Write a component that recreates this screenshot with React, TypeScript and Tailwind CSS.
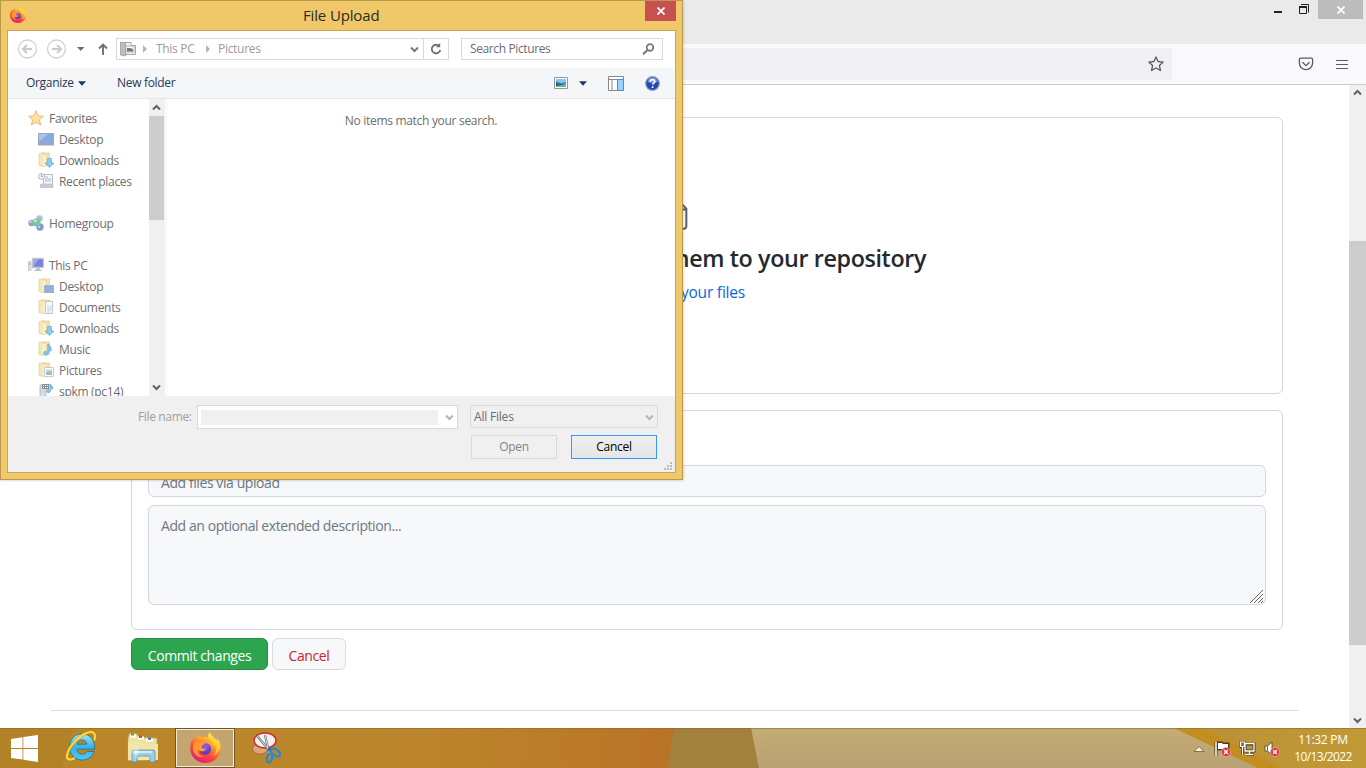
import React from 'react';

type IconProps = { className?: string };

function FirefoxLogo({ className = '' }: IconProps) {
  return (
    <svg viewBox="0 0 32 32" className={className}>
      <defs>
        <linearGradient id="ffBody" x1="0.85" y1="0.05" x2="0.3" y2="1">
          <stop offset="0" stopColor="#fff04a" />
          <stop offset="0.35" stopColor="#ffa32a" />
          <stop offset="0.65" stopColor="#ff4a3c" />
          <stop offset="1" stopColor="#e3187c" />
        </linearGradient>
        <radialGradient id="ffGlobe" cx="0.5" cy="0.3" r="0.7">
          <stop offset="0" stopColor="#9a5bf5" />
          <stop offset="1" stopColor="#4a3aa8" />
        </radialGradient>
      </defs>
      <path d="M20.5 0c-1.500 2-2 3.600-1.700 5.600-2.500-.8-5-.8-7.300.2C10 5 9 3.600 8.600 2.400 6.500 4 5.600 6 5.300 8 4.500 8 3.900 6.500 3.900 5.600 1.500 8.500.2 12 .2 16.500.2 25.500 7.200 32 16 32s15.800-6.800 15.800-15.600c0-4.500-1.500-7.600-4-10.200.3 1.400.3 2.500.1 3.400C25.600 5 21.500 4 20.500 0z" fill="url(#ffBody)" />
      <circle cx="15.800" cy="17.500" r="6" fill="url(#ffGlobe)" />
      <path d="M4.500 10.500c3-2 5.500-1 7.500.6 1.400 0 3.300-.1 3.400.6.1 1.400-3 1.700-3.300 3.400-.2 1.600 2.500 2.600 4.600 1.900-1.200 3.400-5.400 3.800-8 1.800-1.300 4.200 3 7 7 6.400-6.500 2.600-12.700-2.500-12.700-8.500 0-2.500.4-4.400 1.500-6.200z" fill="#ff9a2b" />
      <path d="M20.500 0c-1.500 2-2 3.600-1.700 5.600 2.600 3 6.400 4.700 6.200 10 1-1.400 1.200-2.600 1.200-3.600 2.300 5 .8 10-3.200 12.800 6.500-1.800 9-8.300 7.300-13.300-.5-2-1.500-3.800-2.500-5.300.3 1.400.3 2.500.1 3.400C25.600 5 21.500 4 20.500 0z" fill="#ffd83d" opacity=".8" />
    </svg>
  );
}

function ExplorerLogo() {
  return (
    <svg viewBox="0 0 32 32" className="size-8">
      <defs>
        <linearGradient id="ieBlue" x1="0" y1="0" x2="0" y2="1">
          <stop offset="0" stopColor="#a5e9fa" />
          <stop offset=".5" stopColor="#36b2e8" />
          <stop offset="1" stopColor="#4ccaf4" />
        </linearGradient>
      </defs>
      <path d="M17 4C9 4 4.500 10 4.500 17S9.500 30 17 30c6 0 10.500-3 12-8.500h-7c-1 1.900-2.600 2.700-4.800 2.700-3 0-5-1.900-5.200-5h17.600C30.200 10 25 4 17 4zm-4.800 10.200c.4-2.700 2.200-4.300 4.900-4.300s4.500 1.600 4.800 4.300z" fill="url(#ieBlue)" stroke="#16709f" strokeWidth=".8" />
      <path d="M29.500 9.500C31.500 2 27 .5 20.500 3.500 12 7.500 3 18 2 25.500c-.5 4 2.500 5 7 3" fill="none" stroke="#c08a10" strokeWidth="3" strokeLinecap="round" />
      <path d="M29.500 9.500C31.500 2 27 .5 20.500 3.500 12 7.500 3 18 2 25.500c-.5 4 2.500 5 7 3" fill="none" stroke="#ffdc3c" strokeWidth="2" strokeLinecap="round" />
    </svg>
  );
}

function FileManagerIcon() {
  return (
    <svg viewBox="0 0 34 32" className="h-8 w-[34px]">
      <path d="M3 5l1-4h7l1 3 14 2 1 22-24 1z" fill="#c9bd80" />
      <path d="M5 2h7l2 4h18v22H3V6z" fill="#efe3a1" stroke="#b7a35a" strokeWidth=".7" />
      <path d="M5 2.500h6v3H5zM13 4.500h6v3h-6zM21 6.500h7v3h-7z" fill="#fff" />
      <path d="M6 1.500h3v2H6z" fill="#2fb34a" />
      <path d="M14 3.800h3v2h-3z" fill="#d33a2c" />
      <path d="M23 5.800h3v2h-3z" fill="#2a74c9" />
      <path d="M3 10h10l2 2h18v16H3z" fill="#f2e5a6" />
      <path d="M7 20q0-2 2-2h19q2 0 2 2v10h-5v-5q0-1-1-1H13q-1 0-1 1v5H7z" fill="#a0cfe4" stroke="#4f97b8" strokeWidth=".8" />
      <path d="M9 20h18" stroke="#e0f5fb" strokeWidth="1.500" />
      <path d="M11 14v12M6 20h10M8 17l6 6M14 17l-6 6" stroke="#fff" strokeWidth=".7" />
    </svg>
  );
}

function SnippingIcon() {
  return (
    <svg viewBox="0 0 32 32" className="size-8">
      <ellipse cx="9" cy="17" rx="7.500" ry="5" fill="#d8a878" stroke="#b86450" />
      <ellipse cx="14" cy="8.500" rx="11" ry="7.500" fill="#f4f0f0" stroke="#cf2d2d" strokeWidth="1.500" />
      <path d="M6 4l13 15M14 3l4 18" stroke="#67707a" strokeWidth="2.200" />
      <path d="M6 4l13 15M14 3l4 18" stroke="#d9e0e4" strokeWidth="1" />
      <path d="M17 18l3-1" stroke="#1c68a4" strokeWidth="3" />
      <ellipse cx="24.500" cy="20.500" rx="5.300" ry="3" transform="rotate(38 24.500 20.500)" fill="none" stroke="#2b8acb" strokeWidth="2.400" />
      <ellipse cx="18.500" cy="26" rx="2.600" ry="4.500" transform="rotate(15 18.500 26)" fill="none" stroke="#2b8acb" strokeWidth="2.400" />
    </svg>
  );
}

const folderBack = (
  <>
    <path d="M1 1.500l5-1v14l-5-1z" fill="#f6e9b9" stroke="#e3cf95" strokeWidth=".7" />
    <path d="M6 1h5.500v12.500H6z" fill="#f3e2a9" stroke="#e3cf95" strokeWidth=".7" />
    <path d="M4 3l4-1v13l-4-1z" fill="#faf0cc" stroke="#e8d8a4" strokeWidth=".5" />
  </>
);

type Kind = 'star' | 'desktop' | 'downloads' | 'recent' | 'homegroup' | 'pc' | 'folderDesktop' | 'documents' | 'music' | 'pictures' | 'media';

function TreeIcon({ kind }: { kind: Kind }) {
  const art: Record<Kind, React.ReactNode> = {
    star: <path d="M8 .8l2.200 5 5.200.5-4 3.500 1.200 5.100L8 12.200l-4.600 2.700 1.200-5.100-4-3.500 5.200-.5z" fill="#fce3a0" stroke="#f0b47c" strokeWidth="1" />,
    desktop: (
      <>
        <path d="M.5 2.500h15v11H.5z" fill="#87a9df" stroke="#9aa8bb" />
        <path d="M1 3h9L2 10H1z" fill="#a9c3ee" />
        <path d="M0 12h16v2.500H0z" fill="#9aa9ba" />
      </>
    ),
    downloads: (
      <>
        {folderBack}
        <path d="M9.500 6.500h4v4.500H16l-4.500 4.500L7 11h2.500z" fill="#8cccf0" stroke="#69a9d4" strokeWidth=".7" />
      </>
    ),
    recent: (
      <>
        <path d="M5.500 1.500h9v10h-9z" fill="#f6f8fa" stroke="#b5bcc3" />
        <path d="M7 4h3M7 6h6M7 8h6" stroke="#9bbcdc" />
        <path d="M3 11l12 0v3.500H2z" fill="#c9cdd1" stroke="#b1b6ba" strokeWidth=".6" />
        <circle cx="3.500" cy="3.500" r="3" fill="#f4f4f4" stroke="#b5b9bd" />
        <path d="M3.500 1.500v2H5" stroke="#888" strokeWidth=".7" fill="none" />
      </>
    ),
    homegroup: (
      <>
        <circle cx="3.500" cy="8" r="3.200" fill="#8ba4d8" />
        <circle cx="11.500" cy="3.500" r="3.200" fill="#b1bfe4" />
        <circle cx="12" cy="12" r="3.700" fill="#8b96d8" />
        <circle cx="8.500" cy="7.500" r="4" fill="#7fc795" />
        <circle cx="7.500" cy="6" r="1.300" fill="#c9efd0" />
        <circle cx="2.500" cy="6.800" r="1" fill="#dde7fa" />
        <circle cx="11" cy="12" r="1" fill="#dcdffa" />
      </>
    ),
    pc: (
      <>
        <path d="M.5 4.500h2.500v9H.5z" fill="#e0e3e3" stroke="#b8bdbe" strokeWidth=".7" />
        <path d="M1.300 6h1v2h-1z" fill="#6cc36c" />
        <path d="M4.500 1.500h11v9h-11z" fill="#7a7ede" stroke="#c5c9ce" strokeWidth="1.300" />
        <path d="M5 2h6l-5 7H5z" fill="#9ca4ee" />
        <path d="M8 11h4v2h2v1H6v-1h2z" fill="#bfc4c8" />
      </>
    ),
    folderDesktop: (
      <>
        {folderBack}
        <path d="M6.500 7.500h9v6h-9z" fill="#8eb0e2" stroke="#a7b4c4" />
        <path d="M6 13h10v2H6z" fill="#9fb0c6" />
      </>
    ),
    documents: (
      <>
        {folderBack}
        <path d="M7.500 2.500h7v12h-7z" fill="#fbfcfd" stroke="#b9c0c7" strokeWidth=".9" />
        <path d="M9 7h2M12 7h1.500M9 9h4.500M9 11h4.500M9 13h3" stroke="#a8c3dd" strokeWidth=".8" />
      </>
    ),
    music: (
      <>
        {folderBack}
        <path d="M10 12V3c1 2 4 3 3 7M10 12a2 1.700 0 1 1-1.500-1.500" stroke="#78b9de" fill="#8ac6e8" strokeWidth="1.500" />
      </>
    ),
    pictures: (
      <>
        {folderBack}
        <path d="M6.500 5.500h9v9h-9z" fill="#fff" stroke="#c2c8cd" strokeWidth=".9" />
        <path d="M8 7.500h6v3H8z" fill="#b5dcf2" />
        <path d="M8 10l6-1v4H8z" fill="#9cc4ac" />
      </>
    ),
    media: (
      <>
        <path d="M2 2h6v14H2z" fill="#d9dcde" stroke="#aaafb3" strokeWidth=".8" />
        <path d="M4 1h7v5H4z" fill="#86919a" />
        <path d="M5 2h1v1H5zM7 2h1v1H7zM9 2h1v1H9zM5 4h1v1H5zM7 4h1v1H7zM9 4h1v1H9z" fill="#f4f4f4" />
        <path d="M12 8V1c1 2 3 2 2.500 5M12 8a1.500 1.300 0 1 1-1-1.200" stroke="#6fb5e0" fill="#8ac6e8" strokeWidth="1.200" />
      </>
    ),
  };
  return <svg viewBox="0 0 16 16" className="mb-px size-4 shrink-0">{art[kind]}</svg>;
}

const tree: { label: string; kind?: Kind; top?: boolean }[] = [
  { label: 'Favorites', kind: 'star', top: true },
  { label: 'Desktop', kind: 'desktop' },
  { label: 'Downloads', kind: 'downloads' },
  { label: 'Recent places', kind: 'recent' },
  { label: '' },
  { label: 'Homegroup', kind: 'homegroup', top: true },
  { label: '' },
  { label: 'This PC', kind: 'pc', top: true },
  { label: 'Desktop', kind: 'folderDesktop' },
  { label: 'Documents', kind: 'documents' },
  { label: 'Downloads', kind: 'downloads' },
  { label: 'Music', kind: 'music' },
  { label: 'Pictures', kind: 'pictures' },
  { label: 'spkm (pc14)', kind: 'media' },
];

function Chevron({ up = false, className = '' }: { up?: boolean; className?: string }) {
  return (
    <svg viewBox="0 0 9 7" className={`h-[7px] w-[9px] ${className}`} fill="none" stroke="currentColor" strokeWidth="2">
      <path d={up ? 'M1 5.500L4.500 2 8 5.500' : 'M1 1.500L4.500 5 8 1.500'} />
    </svg>
  );
}

function Caret({ className = '' }: IconProps) {
  return <svg viewBox="0 0 8 5" className={`h-[5px] w-2 ${className}`}><path d="M0 .3h8L4 4.700z" fill="currentColor" /></svg>;
}

function NavRow() {
  return (
    <div className="flex h-[37px] shrink-0 items-center bg-white">
      <svg viewBox="0 0 96 24" className="mb-px ml-2 h-6 w-24 shrink-0" fill="none">
        <g stroke="#d0d0d0" strokeWidth="1.300">
          <circle cx="11.500" cy="12" r="9" />
          <circle cx="40.500" cy="12" r="9" />
        </g>
        <path d="M16 12H7.500M11 8l-4 4 4 4M36 12h8.500M41 8l4 4-4 4" stroke="#cacaca" strokeWidth="2" />
        <path d="M61 10h7.500L64.750 14z" fill="#6d6d6d" />
        <path d="M87 18V8M83 11.500L87 7.500l4 4" stroke="#707070" strokeWidth="1.900" />
      </svg>
      <div className="mb-px ml-1 flex h-[22px] w-[333px] items-center border border-[#d9d9d9] text-[12px] tracking-[-0.3px] text-[#9b9b9b]">
        <svg viewBox="0 0 16 16" className="mb-px ml-[3px] size-4">
          <path d="M4 1.500h7v3h4.500v9H4z" fill="#f1f1f1" stroke="#a8a8a8" />
          <path d="M6 5h8v6H6z" fill="#fff" stroke="#aaa" strokeWidth=".8" />
          <path d="M7 7h3l3 1v2.500H7z" fill="#777" />
          <path d="M.5 1l5 1v13l-5-1z" fill="#bdbdbd" stroke="#999" strokeWidth=".7" />
        </svg>
        <svg viewBox="0 0 4 8" className="ml-[7px] h-2 w-1"><path d="M0 0l4 4-4 4z" fill="#b5b5b5" /></svg>
        <span className="ml-[9px] w-[41px] whitespace-nowrap leading-[18px]">This PC</span>
        <svg viewBox="0 0 4 8" className="ml-[9px] h-2 w-1"><path d="M0 0l4 4-4 4z" fill="#b5b5b5" /></svg>
        <span className="ml-2 whitespace-nowrap leading-[18px]">Pictures</span>
        <Chevron className="ml-auto mr-1 text-[#777]" />
        <div className="flex h-full w-[25px] items-center justify-center border-l border-[#d9d9d9]">
          <svg viewBox="0 0 12 12" className="size-3" fill="none" stroke="#707070" strokeWidth="1.800">
            <path d="M9.500 3.400A4.300 4.300 0 1 0 10.300 7" />
            <path d="M10.200 0v4.300H6z" fill="#707070" stroke="none" />
          </svg>
        </div>
      </div>
      <div className="mb-px ml-3 flex h-[22px] w-[202px] items-center justify-between border border-[#d9d9d9] pl-2 pr-[7px] text-[12px] tracking-[-0.38px] text-[#6d6d6d]">
        <span className="whitespace-nowrap leading-[18px]">Search Pictures</span>
        <svg viewBox="0 0 13 12" className="h-3 w-[13px]" fill="none" stroke="#777">
          <circle cx="8" cy="4.500" r="3.300" strokeWidth="1.700" />
          <path d="M5.500 7L1 11.300" strokeWidth="2" />
        </svg>
      </div>
    </div>
  );
}

function CommandBar() {
  return (
    <div className="flex h-[31px] shrink-0 items-center border-b border-[#e6e7e9] bg-[#f5f6f7] text-[12px] tracking-[-0.32px] text-[#1e395b]">
      <span className="ml-[18px] w-[48px] whitespace-nowrap">Organize</span>
      <Caret className="ml-1" />
      <span className="ml-[31px] w-[60px] whitespace-nowrap">New folder</span>
      <svg viewBox="0 0 14 12" className="ml-auto h-3 w-3.5">
        <path d="M.5.500h13v11H.5z" fill="#fff" stroke="#8d9aa6" />
        <path d="M2 2h10v8H2z" fill="#3b8fd1" />
        <path d="M2 2h10v3L7 6 2 4z" fill="#8bc6ee" />
        <path d="M2 6l4 1 6 0v1L2 10z" fill="#285f3d" />
        <path d="M2 9l10-2v3H2z" fill="#6bb4a0" />
      </svg>
      <Caret className="ml-[11px]" />
      <svg viewBox="0 0 16 15" className="ml-[21px] h-[15px] w-4" fill="none">
        <path d="M.5.500h15v14H.5z" fill="#fff" stroke="#85888c" />
        <path d="M.5 3.500h15M4 3.500v11" stroke="#85888c" />
        <path d="M9.500 3.500h6v11h-6z" fill="#9bd1fb" stroke="#3d93df" />
      </svg>
      <svg viewBox="0 0 15 15" className="ml-[21px] mr-[15px] size-[15px]" fill="none">
        <circle cx="7.500" cy="7.500" r="6.800" fill="#2346b8" stroke="#8f9bb5" strokeWidth="1.200" />
        <path d="M2.500 6a5 4.500 0 0 1 10 0q-5 2-10 0z" fill="#6f94e8" />
        <path d="M5.300 5.800c0-3 4.500-2.800 4.500-.3 0 1.600-2.200 1.500-2.200 3.300M7.600 10.300v1.700" stroke="#fff" strokeWidth="1.600" />
      </svg>
    </div>
  );
}

function UploadDialog() {
  return (
    <section className="absolute left-0 top-0 z-10 flex h-[480px] w-[683px] flex-col border border-[#b99a4c] bg-[#f0c869] px-[6px] pb-[6px] shadow-[0_0_3px_rgba(0,0,0,0.25)]">
      <header className="flex h-[29px] shrink-0 items-start">
        <FirefoxLogo className="ml-[3px] mt-[6px] size-4" />
        <h1 className="ml-[277px] mt-1 whitespace-nowrap text-[15px] leading-[21px] tracking-[-0.15px] text-[#2c2a26]">File Upload</h1>
        <button className="ml-auto flex h-5 w-[31px] items-center justify-center bg-[#c75050]">
          <svg viewBox="0 0 8 8" className="size-2" stroke="#fff" strokeWidth="1.700"><path d="M.5.500l7 7M7.500.500l-7 7" /></svg>
        </button>
      </header>
      <div className="flex min-h-0 flex-1 flex-col border border-[#c8a558] bg-[#f0f0f0]">
        <NavRow />
        <CommandBar />
        <div className="flex h-[297px] shrink-0 bg-white">
          <nav className="h-full w-[141px] overflow-hidden pt-[9px]">
            {tree.map((item, i) => (
              <div key={i} className={`flex h-[21px] items-center gap-[5px] whitespace-nowrap text-[12px] tracking-[-0.3px] text-[#6d6d6d] ${item.top ? 'pl-5' : 'pl-[30px]'}`}>
                {item.kind && <TreeIcon kind={item.kind} />}
                <span>{item.label}</span>
              </div>
            ))}
          </nav>
          <div className="flex h-full w-4 flex-col items-center bg-[#f0f0f0] text-[#606060]">
            <div className="flex h-[17px] w-full items-center justify-center pr-[2px]"><Chevron up /></div>
            <div className="mr-px h-[104px] w-[15px] bg-[#cdcdcd]" />
            <div className="mt-auto flex h-[17px] w-full items-center justify-center pr-[2px]"><Chevron /></div>
          </div>
          <div className="ml-px flex flex-1 justify-center border-l border-[#f4f4f4] pt-[14px] text-[12px] leading-4 tracking-[-0.3px] text-[#6d6d6d]">
            <p>No items match your search.</p>
          </div>
        </div>
        <footer className="flex flex-1 flex-col pt-[9px]">
          <div className="flex items-start">
            <label className="ml-[130px] mt-1 w-[59px] whitespace-nowrap text-[12px] leading-4 tracking-[-0.35px] text-[#a0a0a0]">File name:</label>
            <div className="flex h-6 w-[261px] items-center border border-[#d9d9d9] bg-white">
              <div className="ml-[3px] h-[15px] w-[237px] bg-[#f0f0f0]" />
              <Chevron className="ml-auto mr-[3px] mt-px text-[#b5b5b5]" />
            </div>
            <div className="ml-3 flex h-[23px] w-[188px] items-center justify-between border border-[#d9d9d9] pl-[3px] pr-[3px] text-[12px] tracking-[-0.2px] text-[#6d6d6d]">
              <span>All Files</span>
              <Chevron className="mt-px text-[#b5b5b5]" />
            </div>
          </div>
          <div className="mt-[6px] flex justify-end gap-3.5 pr-[18px] text-[12px] tracking-[-0.3px]">
            <button className="h-6 w-[86px] border border-[#d9d9d9] text-[#838383]">Open</button>
            <button className="h-6 w-[86px] border border-[#3399ff] bg-gradient-to-b from-[#f0f0f0] to-[#e5e5e5] text-black">Cancel</button>
          </div>
          <svg viewBox="0 0 8 8" className="ml-auto mr-[3px] mt-[3px] size-2" fill="#bcbcbc">
            <path d="M6 0h2v2H6zM3 3h2v2H3zM6 3h2v2H6zM0 6h2v2H0zM3 6h2v2H3zM6 6h2v2H6z" />
          </svg>
        </footer>
      </div>
    </section>
  );
}

function BrowserChrome() {
  return (
    <>
      <div className="flex h-[44px] shrink-0 items-start justify-end bg-[#eaeaea]">
        <svg viewBox="0 0 50 20" className="h-5 w-[50px]" fill="none" stroke="#222">
          <path d="M6 12h8" strokeWidth="2" />
          <path d="M31.500 7h7v6.500h-7zM33 4.500h7.500v8" strokeWidth="1" />
          <path d="M31 7h8" strokeWidth="2" />
        </svg>
        <button className="mr-[3px] flex h-[19px] w-[45px] items-center justify-center bg-[#bcbcbc]">
          <svg viewBox="0 0 8 8" className="size-2" stroke="#fff" strokeWidth="1.800"><path d="M.5.500l7 7M7.500.500l-7 7" /></svg>
        </button>
      </div>
      <div className="flex h-[41px] shrink-0 items-center justify-end border-b border-[#cacacf] bg-[#f9f9fb]">
        <div className="flex h-8 w-[700px] items-center justify-end rounded bg-[#f0f0f4] pr-2">
          <svg viewBox="0 0 16 16" className="size-4" fill="none" stroke="#5b5b66" strokeWidth="1.300" strokeLinejoin="round">
            <path d="M8 .9l2.100 4.600 5.100.6-3.800 3.400 1 5L8 12l-4.400 2.500 1-5L.8 6.100l5.100-.6z" />
          </svg>
        </div>
        <svg viewBox="0 0 16 16" className="ml-[126px] size-4" fill="none" stroke="#5b5b66" strokeWidth="1.300" strokeLinecap="round">
          <path d="M2.700 2.200h10.600c.8 0 1.300.5 1.300 1.300v3.600a6.600 6.600 0 0 1-13.200 0V3.500c0-.8.5-1.300 1.300-1.300zM4.800 6.500L8 9.600l3.200-3.100" />
        </svg>
        <svg viewBox="0 0 12 11" className="ml-[22px] mr-[18px] h-[11px] w-3" stroke="#5b5b66" strokeWidth="1.200">
          <path d="M0 1.500h12M0 5.500h12M0 9.500h12" />
        </svg>
      </div>
    </>
  );
}

function UploadPage() {
  return (
    <main className="flex min-h-0 flex-1 bg-white">
      <div className="flex flex-1 flex-col pt-8">
        <div className="ml-[131px] w-[1152px]">
          <div className="flex h-[277px] flex-col items-end rounded-md border border-[#d0d7de] pt-[81px]">
            <svg viewBox="0 0 24 24" className="mr-[590px] h-8 w-8" fill="none" stroke="#57606a" strokeWidth="1.500">
              <path d="M5 2h9.500l5.250 5.250V20.500a1.750 1.750 0 0 1-1.750 1.750H5a1.750 1.750 0 0 1-1.750-1.750V3.750C3.250 2.800 4 2 5 2zM14 2v4.500c0 .8.500 1.300 1.300 1.300h4.400" />
            </svg>
            <h2 className="mr-[356px] mt-[9px] whitespace-nowrap text-[23.3px] font-semibold leading-9 tracking-[-0.38px] text-[#24292f]">Drag files here to add them to your repository</h2>
            <p className="mr-[537px] mt-1 whitespace-nowrap text-[15.5px] leading-6 tracking-[-0.2px] text-[#24292f]">Or <a className="text-[#0969da]">choose your files</a></p>
          </div>
          <div className="mt-4 h-[220px] rounded-md border border-[#d0d7de] px-4 pt-[54px] text-[14px] tracking-[-0.42px] text-[#6e7781]">
            <div className="flex h-8 items-center rounded-md border border-[#d0d7de] bg-[#f6f8fa] px-3 pt-[3px]"><span>Add files via upload</span></div>
            <div className="mt-2 flex h-[100px] justify-between rounded-md border border-[#d0d7de] bg-[#f6f8fa] pl-3">
              <span className="pt-[9px] leading-[21px]">Add an optional extended description...</span>
              <svg viewBox="0 0 15 15" className="mr-px self-end size-[15px]" stroke="#666" fill="none"><path d="M1 14L14 1M5 14l9-9M9 14l5-5M12 14l2-2" /></svg>
            </div>
          </div>
          <div className="mt-2 flex gap-1 text-[14px] tracking-[-0.4px]">
            <button className="h-8 w-[137px] rounded-md border border-[#288f46] bg-[#2da44e] pt-0.5 text-white">Commit changes</button>
            <button className="h-8 w-[74px] rounded-md border border-[#d8dbde] bg-[#f6f8fa] pt-0.5 text-[#cf222e]">Cancel</button>
          </div>
        </div>
        <hr className="ml-[51px] mt-10 w-[1248px] border-[#d8dee4]" />
      </div>
      <div className="flex w-[17px] flex-col bg-[#f0f0f0] text-[#606060]">
        <div className="flex h-[156px] justify-center pt-1"><Chevron up /></div>
        <div className="h-[404px] bg-[#cdcdcd]" />
        <div className="mt-auto flex h-4 items-center justify-center"><Chevron /></div>
      </div>
    </main>
  );
}

function Wallpaper() {
  return (
    <svg viewBox="0 0 1366 40" className="absolute inset-0 h-10 w-full" preserveAspectRatio="none">
      <defs>
        <linearGradient id="barLeft">
          <stop offset="0" stopColor="#b98628" />
          <stop offset=".6" stopColor="#bd862c" />
          <stop offset="1" stopColor="#b97227" />
        </linearGradient>
        <linearGradient id="barTan" x1="0" y1="0" x2="0" y2="1">
          <stop offset="0" stopColor="#c4ac75" />
          <stop offset="1" stopColor="#b9a272" />
        </linearGradient>
        <linearGradient id="barRight">
          <stop offset="0" stopColor="#b99134" />
          <stop offset="1" stopColor="#c19937" />
        </linearGradient>
      </defs>
      <path d="M0 0h680v40H0z" fill="url(#barLeft)" />
      <path d="M0 0h73L62 40H0z" fill="#ad7d24" opacity=".5" />
      <path d="M674 0h80l6 40h-93z" fill="#a2803d" />
      <path d="M751 0h430l90 40H759z" fill="url(#barTan)" />
      <path d="M1174 0h192v40H1262z" fill="url(#barRight)" />
      <path d="M1174 0h28l80 40h-24z" fill="#c38e20" />
      <path d="M0 .5h1366" stroke="#8b6d2c" opacity=".6" />
    </svg>
  );
}

function Blocked({ x, y }: { x: number; y: number }) {
  return (
    <g>
      <circle cx={x} cy={y} r="4.500" fill="#dc2f35" stroke="#f5b0ac" strokeWidth=".7" />
      <path d={`M${x - 2} ${y - 2}l4 4m0-4l-4 4`} stroke="#fff" strokeWidth="1.400" />
    </g>
  );
}

function Taskbar() {
  return (
    <div className="relative h-10 shrink-0 overflow-hidden">
      <Wallpaper />
      <div className="relative flex h-full items-center">
        <svg viewBox="0 0 27 27" className="ml-[11px] size-[27px]" fill="#fff">
          <path d="M0 4l11.500-1.700v10.700H0zM12.300 2.100L27 0v13H12.300zM0 13.900h11.500v10.600L0 22.900zM12.300 13.900H27V27l-14.700-2.200z" />
        </svg>
        <div className="ml-[27px] mb-1"><ExplorerLogo /></div>
        <div className="ml-[28px]"><FileManagerIcon /></div>
        <div className="ml-4 flex h-10 w-[60px] border border-[#73542a]">
          <div className="flex flex-1 items-center justify-center border border-[#f6ead2] bg-[#c3a571]"><FirefoxLogo className="mb-px size-[31px]" /></div>
        </div>
        <div className="ml-[16px]"><SnippingIcon /></div>
        <svg viewBox="0 0 90 20" className="ml-auto h-5 w-[90px]" fill="none">
          <path d="M2 13.500l5-5 5 5z" fill="#f5efe2" stroke="#735a30" strokeWidth=".8" />
          <g stroke="#4b3a1e" strokeWidth="3"><path d="M24 4v14M26 5h4l1 1h5v6h-5l-1-1h-4zM53 6h9v7h-9zM54 16.500h8M58 14v2M49 4.500h3v4h-3zM50.500 9v8" /></g>
          <path d="M24 4v14" stroke="#fff" strokeWidth="1.500" />
          <path d="M26 5h4l1 1h5v6h-5l-1-1h-4z" fill="#fff" />
          <path d="M53 5.500h9v7.500h-9zM53.500 16.500h8M57.500 13v3.500" stroke="#fff" strokeWidth="1.300" />
          <path d="M48.500 4h4v4.500h-4z" fill="#8a6b35" stroke="#fff" strokeWidth="1.200" />
          <path d="M50.500 8.500V17" stroke="#fff" strokeWidth="1.300" />
          <path d="M73 8h2.500L80 4v13l-4.500-4H73z" fill="#fff" stroke="#4b3a1e" strokeWidth=".8" />
          <path d="M75.500 8v5" stroke="#8a6b35" />
          <Blocked x={34} y={14} />
          <Blocked x={83} y={14} />
        </svg>
        <div className="ml-2 mr-[10px] flex w-[66px] flex-col items-center whitespace-nowrap text-[12px] leading-[17px] text-white">
          <span className="tracking-[-0.3px]">11:32 PM</span>
          <span className="tracking-[-0.6px]">10/13/2022</span>
        </div>
      </div>
    </div>
  );
}

export default function App() {
  return (
    <div className="relative flex h-[768px] w-[1366px] flex-col overflow-hidden font-['Open_Sans','Noto_Sans',sans-serif]">
      <BrowserChrome />
      <UploadPage />
      <Taskbar />
      <UploadDialog />
    </div>
  );
}
